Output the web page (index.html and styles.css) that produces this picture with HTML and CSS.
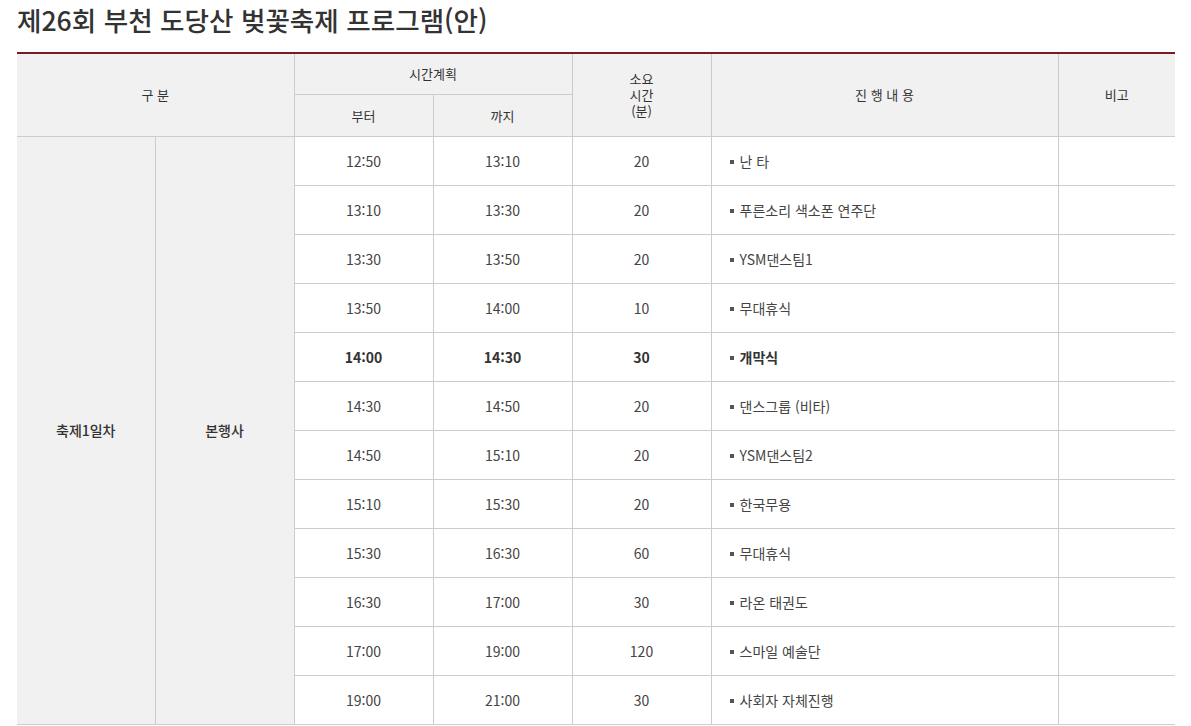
FILE: index.html
```html
<!DOCTYPE html>
<html lang="ko">
<head>
<meta charset="utf-8">
<title>제26회 부천 도당산 벚꽃축제 프로그램(안)</title>
<link rel="stylesheet" href="styles.css">
</head>
<body>
<div class="page">
  <h1 class="title">제26회 부천 도당산 벚꽃축제 프로그램(안)</h1>
  <table class="prog">
    <colgroup>
      <col class="c1"><col class="c2"><col class="c3"><col class="c4"><col class="c5"><col class="c6"><col class="c7">
    </colgroup>
    <thead>
      <tr class="h1">
        <th colspan="2" rowspan="2">구 분</th>
        <th colspan="2">시간계획</th>
        <th rowspan="2" class="dur">소요<br>시간<br>(분)</th>
        <th rowspan="2">진 행 내 용</th>
        <th rowspan="2">비고</th>
      </tr>
      <tr class="h2">
        <th>부터</th>
        <th>까지</th>
      </tr>
    </thead>
    <tbody>
      <tr>
        <td rowspan="12" class="grp">축제1일차</td>
        <td rowspan="12" class="grp">본행사</td>
        <td>12:50</td><td>13:10</td><td>20</td><td class="item">난 타</td><td></td>
      </tr>
      <tr><td>13:10</td><td>13:30</td><td>20</td><td class="item">푸른소리 색소폰 연주단</td><td></td></tr>
      <tr><td>13:30</td><td>13:50</td><td>20</td><td class="item">YSM댄스팀1</td><td></td></tr>
      <tr><td>13:50</td><td>14:00</td><td>10</td><td class="item">무대휴식</td><td></td></tr>
      <tr class="strong"><td>14:00</td><td>14:30</td><td>30</td><td class="item">개막식</td><td></td></tr>
      <tr><td>14:30</td><td>14:50</td><td>20</td><td class="item">댄스그룹 (비타)</td><td></td></tr>
      <tr><td>14:50</td><td>15:10</td><td>20</td><td class="item">YSM댄스팀2</td><td></td></tr>
      <tr><td>15:10</td><td>15:30</td><td>20</td><td class="item">한국무용</td><td></td></tr>
      <tr><td>15:30</td><td>16:30</td><td>60</td><td class="item">무대휴식</td><td></td></tr>
      <tr><td>16:30</td><td>17:00</td><td>30</td><td class="item">라온 태권도</td><td></td></tr>
      <tr><td>17:00</td><td>19:00</td><td>120</td><td class="item">스마일 예술단</td><td></td></tr>
      <tr><td>19:00</td><td>21:00</td><td>30</td><td class="item">사회자 자체진행</td><td></td></tr>
    </tbody>
  </table>
</div>
</body>
</html>
```
FILE: styles.css
```css
html, body {
  margin: 0;
  padding: 0;
  background: #fff;
}
body {
  font-family: "Noto Sans CJK KR", "Noto Sans", sans-serif;
  color: #333;
}
.page {
  padding: 2px 16px 0 17px;
}
.title {
  margin: 0 0 14px;
  font-size: 26.6px;
  line-height: 36px;
  font-weight: 500;
  color: #333;
  letter-spacing: 0;
}
.prog {
  width: 1158px;
  border-collapse: collapse;
  table-layout: fixed;
  border-top: 2px solid #7a1a22;
  font-size: 14px;
  color: #444;
}
.c1 { width: 138px; }
.c2 { width: 139px; }
.c3 { width: 139px; }
.c4 { width: 139px; }
.c5 { width: 139px; }
.c6 { width: 347px; }
.c7 { width: 117px; }
.prog th,
.prog td {
  border: 1px solid #ccc;
  padding: 0;
  text-align: center;
  vertical-align: middle;
}
.prog th {
  background: #f1f1f1;
  font-weight: 400;
  color: #333;
  font-size: 13px;
}
.prog tr.h1 th:first-child,
.prog td.grp { border-left: none; }
.prog tr.h1 th:last-child,
.prog td:last-child { border-right: none; }
.prog tr.h1 { height: 41px; }
.prog tr.h2 { height: 42px; }
.prog th.dur { line-height: 16px; font-size: 13px; padding-top: 1px; }
.prog tbody tr { height: 49px; }
.prog td.grp {
  background: #f1f1f1;
  color: #333;
  font-weight: 500;
}
.prog td.item {
  text-align: left;
  padding-left: 18px;
}
.prog td.item::before {
  content: "";
  display: inline-block;
  width: 4px;
  height: 4px;
  background: #555;
  margin-right: 6px;
  vertical-align: middle;
  position: relative;
  top: -1px;
}
.prog tr.strong td {
  font-weight: 700;
  color: #333;
}
```
